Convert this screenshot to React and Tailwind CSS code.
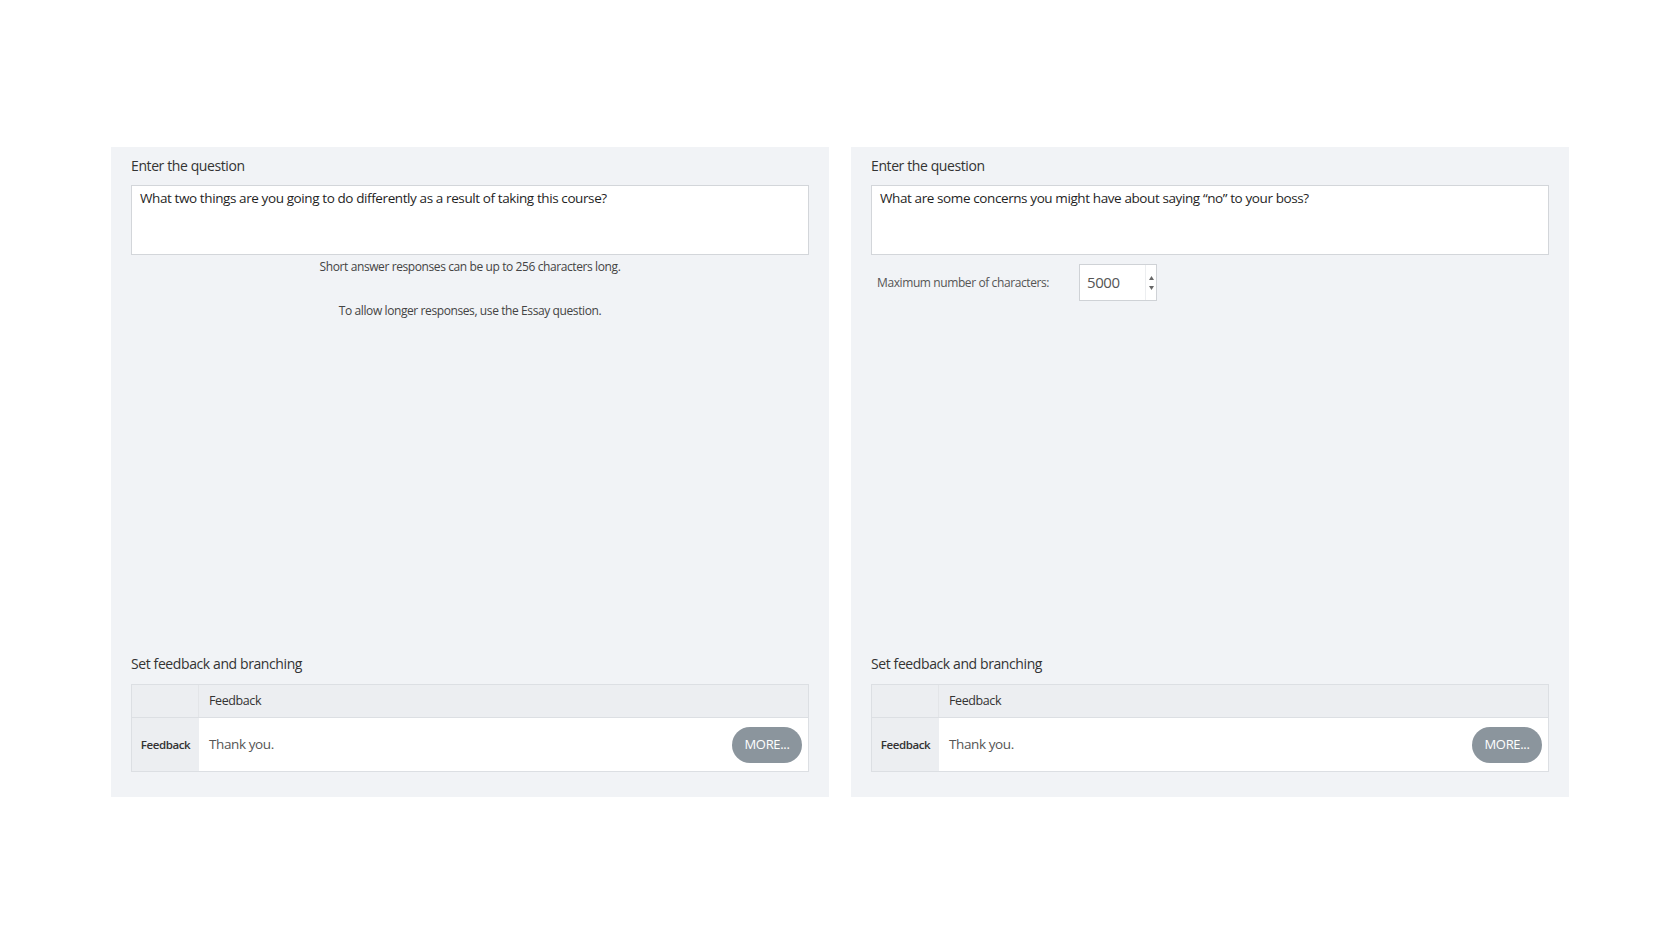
import React from "react";

const font = "font-['Open_Sans','Liberation_Sans',sans-serif] tracking-[-0.025em]";

function FeedbackTable() {
  return (
    <div className="border border-[#dcdfe3]">
      <div className="flex h-[33px] bg-[#eceef1] border-b border-[#dcdfe3]">
        <div className="w-[67px] border-r border-[#e3e5e8]"></div>
        <div className="flex items-center pl-[10px] text-[12.5px] text-[#333]">Feedback</div>
      </div>
      <div className="flex h-[53px]">
        <div className="w-[67px] bg-[#eceef1] flex items-center justify-center text-[11.5px] font-semibold text-[#333]">
          Feedback
        </div>
        <div className="flex-1 bg-white flex items-center justify-between pl-[10px] pr-[6px]">
          <span className="text-[13.5px] text-[#555]">Thank you.</span>
          <button className="h-[36px] w-[70px] rounded-full bg-[#8b959d] text-white text-[13px] tracking-tight">
            MORE...
          </button>
        </div>
      </div>
    </div>
  );
}

function QuestionPanel({ question, children }) {
  return (
    <div className="w-[718px] h-[650px] bg-[#f1f3f6] px-[20px] pt-[9px] pb-[25px] flex flex-col justify-between">
      <div>
        <div className="text-[14px] text-[#333] leading-[20px]">Enter the question</div>
        <div className="mt-[9px] h-[70px] bg-white border border-[#d3d6da] px-[8px] pt-[2px] text-[13.5px] text-[#1f1f1f]">
          {question}
        </div>
        {children}
      </div>
      <div>
        <div className="text-[14px] text-[#333] leading-[20px] mb-[10px]">Set feedback and branching</div>
        <FeedbackTable />
      </div>
    </div>
  );
}

function NumberInput() {
  return (
    <div className="flex h-[37px] w-[78px] bg-white border border-[#cfd2d6]">
      <div className="flex-1 flex items-center pl-[7px] text-[15px] text-[#555]">5000</div>
      <div className="w-[11px] flex flex-col items-center justify-center gap-[6px] border-l border-[#eceef0]">
        <svg width="5" height="4" viewBox="0 0 5 4"><path d="M2.5 0L5 4H0z" fill="#666" /></svg>
        <svg width="5" height="4" viewBox="0 0 5 4"><path d="M0 0h5L2.5 4z" fill="#666" /></svg>
      </div>
    </div>
  );
}

export default function App() {
  return (
    <div className={`min-h-screen bg-white pt-[147px] pl-[111px] flex gap-[22px] ${font}`}>
      <QuestionPanel question="What two things are you going to do differently as a result of taking this course?">
        <div className="text-center text-[12px] text-[#444] mt-[3px] leading-[18px]">
          Short answer responses can be up to 256 characters long.
        </div>
        <div className="text-center text-[12px] text-[#444] mt-[26px] leading-[18px]">
          To allow longer responses, use the Essay question.
        </div>
      </QuestionPanel>
      <QuestionPanel question={"What are some concerns you might have about saying \u201cno\u201d to your boss?"}>
        <div className="flex items-center mt-[9px] pl-[6px]">
          <span className="w-[202px] text-[12px] text-[#555]">Maximum number of characters:</span>
          <NumberInput />
        </div>
      </QuestionPanel>
    </div>
  );
}
